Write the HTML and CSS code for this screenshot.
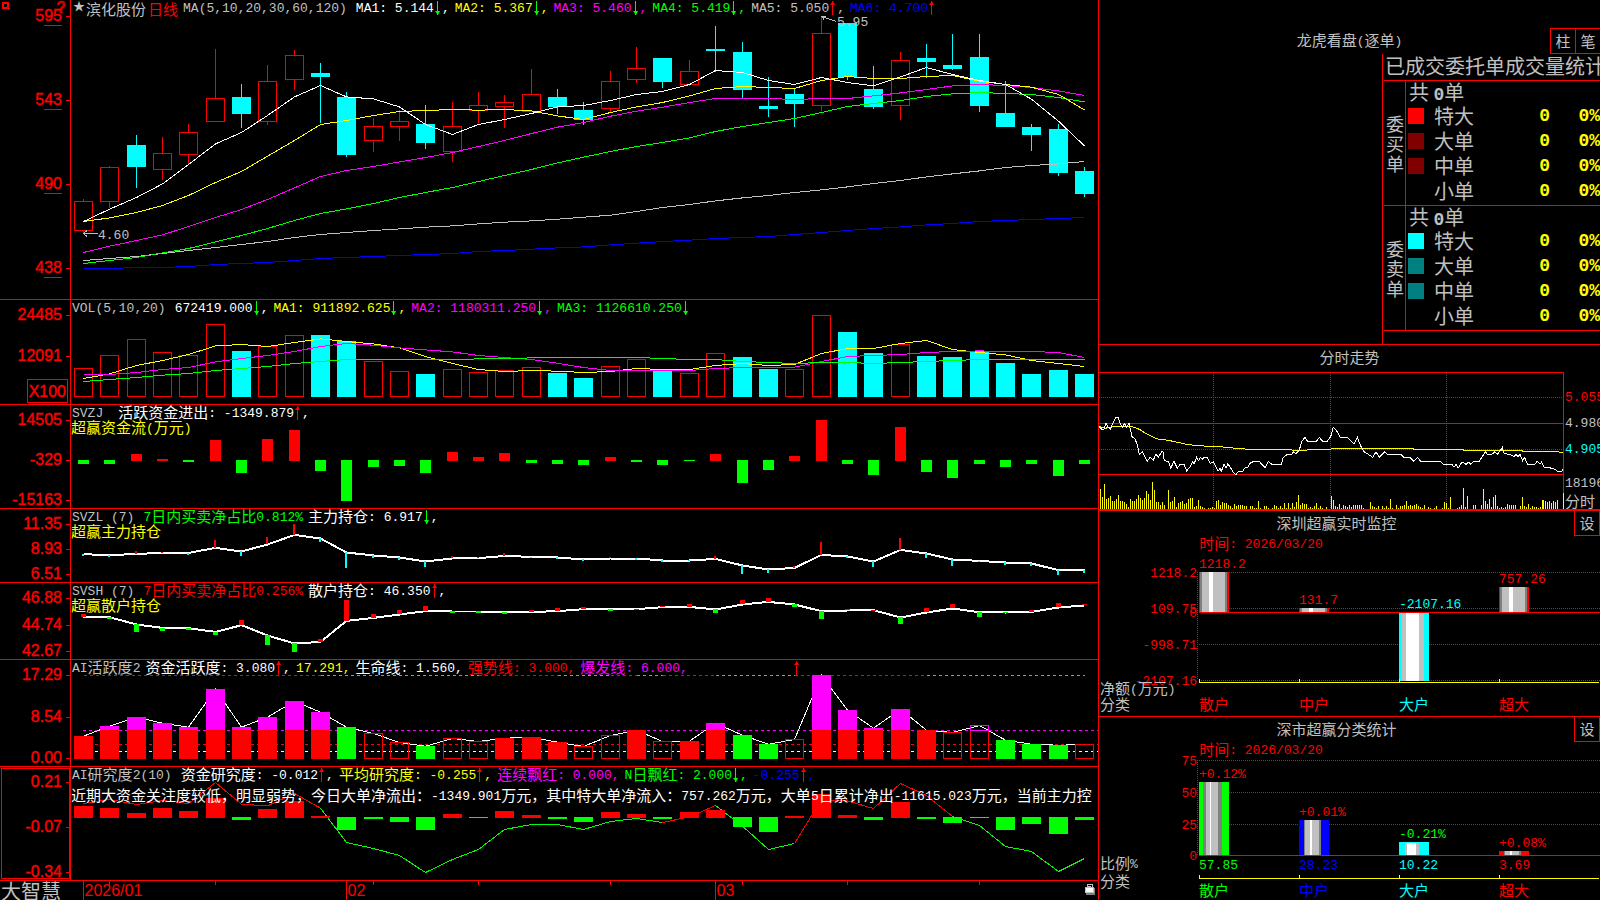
FILE: index.html
```html
<!DOCTYPE html>
<html lang="zh-CN">
<head>
<meta charset="utf-8">
<title>大智慧 - 滨化股份 日线</title>
<link rel="stylesheet" href="styles.css">
</head>
<body>
<div class="app">
  <main class="charts">
    <section class="panel price">
      <div class="axis">
        <svg class="pin" width="8" height="8" viewBox="0 0 8 8"><path d="M1 1h5v5H1zM6 6l1.500 1.500" fill="none" stroke="#f00" stroke-width="2"/></svg>
        <span class="help">?</span>
        <span class="lab u">595</span><span class="lab u">543</span><span class="lab u">490</span><span class="lab u">438</span>
      </div>
      <div class="plot">
        <svg id="price" class="draw"></svg>
        <div class="head name-row">
          <span class="gray star">★</span><span class="gray zh">滨化股份</span><span class="red zh">日线</span>
          <span class="gray args">MA(5,10,20,30,60,120)</span>
          <span class="white">MA1: 5.144<i class="dn"></i>,</span>
          <span class="yellow">MA2: 5.367<i class="dn"></i>,</span>
          <span class="mag">MA3: 5.460<i class="dn"></i>,</span>
          <span class="green">MA4: 5.419<i class="dn"></i>,</span>
          <span class="gray">MA5: 5.050<i class="up"></i>,</span>
          <span class="blue">MA6: 4.700<i class="up"></i></span>
        </div>
      </div>
    </section>

    <section class="panel vol">
      <div class="axis"><span class="lab">24485</span><span class="lab mid">12091</span><span class="unit">X100</span></div>
      <div class="plot">
        <svg id="vol" class="draw"></svg>
        <div class="head">
          <span class="gray args">VOL(5,10,20)</span>
          <span class="white">672419.000<i class="dn"></i>,</span>
          <span class="yellow">MA1: 911892.625<i class="dn"></i>,</span>
          <span class="mag">MA2: 1180311.250<i class="dn"></i>,</span>
          <span class="green">MA3: 1126610.250<i class="dn"></i></span>
        </div>
      </div>
    </section>

    <section class="panel">
      <div class="axis"><span class="lab">14505</span><span class="lab">-329</span><span class="lab">-15163</span></div>
      <div class="plot">
        <svg id="flow" class="draw"></svg>
        <div class="head">
          <span class="gray wide">SVZJ</span>
          <span class="white"><span class="zh">活跃资金进出</span>: -1349.879<i class="up"></i>,</span>
        </div>
        <div class="sub yellow"><span class="zh">超赢资金流</span>(<span class="zh">万元</span>)</div>
      </div>
    </section>

    <section class="panel">
      <div class="axis"><span class="lab">11.35</span><span class="lab">8.93</span><span class="lab">6.51</span></div>
      <div class="plot">
        <svg id="main" class="draw"></svg>
        <div class="head">
          <span class="gray args">SVZL (7)</span>
          <span class="green">7<span class="zh">日内买卖净占比</span>0.812%</span>
          <span class="white"><span class="zh">主力持仓</span>: 6.917<i class="dn"></i>,</span>
        </div>
        <div class="sub yellow"><span class="zh">超赢主力持仓</span></div>
      </div>
    </section>

    <section class="panel">
      <div class="axis"><span class="lab">46.88</span><span class="lab">44.74</span><span class="lab">42.67</span></div>
      <div class="plot">
        <svg id="retail" class="draw"></svg>
        <div class="head">
          <span class="gray args">SVSH (7)</span>
          <span class="red">7<span class="zh">日内买卖净占比</span>0.256%</span>
          <span class="white"><span class="zh">散户持仓</span>: 46.350<i class="up"></i>,</span>
        </div>
        <div class="sub yellow"><span class="zh">超赢散户持仓</span></div>
      </div>
    </section>

    <section class="panel">
      <div class="axis"><span class="lab">17.29</span><span class="lab">8.54</span><span class="lab">0.00</span></div>
      <div class="plot">
        <svg id="active" class="draw"></svg>
        <div class="head">
          <span class="gray">AI<span class="zh">活跃度</span>2</span>
          <span class="white"><span class="zh">资金活跃度</span>: 3.080<i class="up"></i>,</span>
          <span class="yellow">17.291,</span>
          <span class="white"><span class="zh">生命线</span>: 1.560,</span>
          <span class="red"><span class="zh">强势线</span>: 3.000,</span>
          <span class="mag"><span class="zh">爆发线</span>: 6.000,</span>
          <span class="signal"><i class="up"></i></span>
        </div>
      </div>
    </section>

    <section class="panel current">
      <div class="axis"><span class="lab">0.21</span><span class="lab">-0.07</span><span class="lab">-0.34</span></div>
      <div class="plot">
        <svg id="study" class="draw"></svg>
        <div class="head">
          <span class="gray args">AI<span class="zh">研究度</span>2(10)</span>
          <span class="white"><span class="zh">资金研究度</span>: -0.012<i class="up"></i>,</span>
          <span class="yellow"><span class="zh">平均研究度</span>: -0.255<i class="up"></i>,</span>
          <span class="mag"><span class="zh">连续飘红</span>: 0.000,</span>
          <span class="green">N<span class="zh">日飘红</span>: 2.000<i class="dn"></i>,</span>
          <span class="blue">-0.255<i class="up"></i>,</span>
        </div>
        <div class="sub note white"><span class="zh">近期大资金关注度较低，明显弱势，今日大单净流出：</span>-1349.901<span class="zh">万元，其中特大单净流入：</span>757.262<span class="zh">万元，大单</span>5<span class="zh">日累计净出</span>-11615.023<span class="zh">万元，当前主力控</span></div>
      </div>
    </section>

    <footer class="dates">
      <div class="brand">大智慧</div>
      <div class="plot">
        <svg id="dates" class="draw"></svg>
        <div id="months"></div>
        <svg class="lock" width="12" height="13" viewBox="0 0 12 13" shape-rendering="crispEdges"><path d="M10 6v6H2" fill="none" stroke="#808080" stroke-width="2"/><path d="M3 5V2h5v3" fill="none" stroke="#c0c0c0"/><path d="M4 4h3" stroke="#c0c0c0"/><path d="M1 5h9v6H1z" fill="#c0c0c0"/><path d="M2 6h7v4H2z" fill="#fff"/></svg>
      </div>
    </footer>
  </main>

  <aside class="side">
    <section class="box orders">
      <header class="bar"><h2 class="title"><span class="zh">龙虎看盘</span>(<span class="zh">逐单</span>)</h2><div class="tools"><button>柱</button><button>笔</button></div></header>
      <div class="stats">
        <h3>已成交委托单成交量统计</h3>
        <table>
          <colgroup><col class="w-side"><col class="w-chip"><col><col class="w-num"><col class="w-pct"></colgroup>
          <tbody>
            <tr><th rowspan="5" class="vert">委买单</th><td colspan="4" class="sum">共 <b>0</b>单</td></tr>
            <tr><td><span class="chip c1"></span></td><td class="kind">特大</td><td class="num">0</td><td class="num">0%</td></tr>
            <tr><td><span class="chip c2"></span></td><td class="kind">大单</td><td class="num">0</td><td class="num">0%</td></tr>
            <tr><td><span class="chip c2"></span></td><td class="kind">中单</td><td class="num">0</td><td class="num">0%</td></tr>
            <tr><td></td><td class="kind">小单</td><td class="num">0</td><td class="num">0%</td></tr>
          </tbody>
          <tbody>
            <tr><th rowspan="5" class="vert">委卖单</th><td colspan="4" class="sum">共 <b>0</b>单</td></tr>
            <tr><td><span class="chip c3"></span></td><td class="kind">特大</td><td class="num">0</td><td class="num">0%</td></tr>
            <tr><td><span class="chip c4"></span></td><td class="kind">大单</td><td class="num">0</td><td class="num">0%</td></tr>
            <tr><td><span class="chip c4"></span></td><td class="kind">中单</td><td class="num">0</td><td class="num">0%</td></tr>
            <tr><td></td><td class="kind">小单</td><td class="num">0</td><td class="num">0%</td></tr>
          </tbody>
        </table>
      </div>
    </section>

    <section class="box intraday">
      <h2 class="title"><span class="zh">分时走势</span></h2>
      <div class="trend">
        <div class="plot"><svg id="trend" class="draw"></svg></div>
        <div class="scale"><span class="red">5.055</span><span class="gray">4.980</span><span class="cyan">4.905</span><span class="gray low">18196</span><span class="gray last zh">分时</span></div>
      </div>
    </section>

    <section class="box">
      <header class="bar"><h2 class="title"><span class="zh">深圳超赢实时监控</span></h2><button>设</button></header>
      <p class="time"><span class="zh">时间</span>: 2026/03/20</p>
      <div class="over" id="net"></div>
    </section>

    <section class="box last-box">
      <header class="bar"><h2 class="title"><span class="zh">深市超赢分类统计</span></h2><button>设</button></header>
      <p class="time"><span class="zh">时间</span>: 2026/03/20</p>
      <div class="over" id="share"></div>
    </section>
  </aside>
</div>
<script src="app.js"></script>
</body>
</html>
```

FILE: styles.css
```css
* { box-sizing: border-box; }
html, body { height: 100%; }
body {
  margin: 0;
  background: #000;
  color: #c0c0c0;
  font: 13px/15px "Liberation Mono", "Noto Sans CJK SC", monospace;
  overflow: hidden;
}
h2, h3, p { margin: 0; font-weight: normal; }
.zh { font: 400 15px/0 "Noto Sans CJK SC", sans-serif; vertical-align: -1px; }

.app { display: grid; grid-template-columns: minmax(0, 1099fr) minmax(0, 501fr); height: 100vh; }
.charts {
  display: grid;
  grid-template-rows:
    minmax(0, 300fr) minmax(0, 105fr) minmax(0, 104fr) minmax(0, 74fr)
    minmax(0, 77fr) minmax(0, 107fr) minmax(0, 114fr) minmax(0, 19fr);
  border-right: 1px solid #f00;
}

.white { color: #fff; }
.yellow { color: #ff0; }
.mag { color: #f0f; }
.green { color: #0f0; }
.gray { color: #c0c0c0; }
.blue { color: #00f; }
.red { color: #f00; }
.cyan { color: #0ff; }

.panel { display: grid; grid-template-columns: 71px minmax(0, 1fr); border-bottom: 1px solid #f00; }
.axis {
  position: relative;
  display: flex;
  flex-direction: column;
  justify-content: space-between;
  align-items: flex-end;
  padding: 7px 8px 0 0;
  border-right: 1px solid #f00;
  color: #f00;
  font: 16px/16px "Liberation Sans", Arial, sans-serif;
  -webkit-text-stroke: 0.4px #f00;
}
.price .axis { padding-top: 8px; padding-bottom: 23px; }
.vol .axis { padding-bottom: 1px; }
.current .axis { outline: 1px solid #f00; outline-offset: -2px; }
.lab { position: relative; }
.lab::before { content: ""; position: absolute; right: -8px; top: 8px; width: 4px; height: 1px; background: #f00; }
.lab.u::after { content: ""; position: absolute; right: 0; bottom: -2px; width: 18px; height: 1px; background: #f00; }
.lab.mid { margin-top: 10px; }
.unit { border: 1px solid #f00; padding: 3px 1px 1px; margin-right: -6px; line-height: 18px; }
.pin { position: absolute; left: 2px; top: 2px; }
.help { position: absolute; right: 4px; top: 0; font-weight: bold; color: #c00000; }

.plot { position: relative; min-width: 0; overflow: hidden; }
.draw { position: absolute; inset: 0; width: 100%; height: 100%; display: block; }
.head { position: relative; display: flex; gap: 5px; white-space: pre; padding-left: 1px; height: 15px; line-height: 17px; }
.head .args { margin-right: 4px; }
.head .wide { margin-right: 10px; }
.head .signal { margin-left: 100px; }
.name-row > .zh { line-height: 17px; }
.name-row > .zh + .zh { margin-left: -3px; }
.name-row .star { font-size: 12px; width: 10px; margin: 0 -2px 0 1px; }
.sub { position: relative; white-space: pre; line-height: 17px; height: 15px; }
.note { margin-top: 6px; }
.up, .dn { position: relative; display: inline-block; width: 8px; height: 14px; vertical-align: -3px; }
.up::before, .dn::before { content: ""; position: absolute; left: 3px; top: 0; width: 1px; height: 14px; background: currentColor; }
.up::after, .dn::after { content: ""; position: absolute; left: 1px; width: 0; border: solid transparent; }
.up { color: #f00; }
.dn { color: #0f0; }
.up::after { top: 0; border-width: 0 2px 4px 3px; border-bottom-color: #f00; }
.dn::after { bottom: 0; border-width: 4px 2px 0 3px; border-top-color: #0f0; }

.dates { display: grid; grid-template-columns: 70px minmax(0, 1fr); }
.brand { font: 20px/19px "Noto Sans CJK SC", sans-serif; padding-left: 1px; white-space: nowrap; }
.month { position: absolute; top: 1px; color: #f00; font: 16px/18px "Liberation Sans", Arial, sans-serif; padding-left: 1px; }
.lock { position: absolute; right: 2px; top: 1px; }

.side {
  display: grid;
  grid-template-rows: minmax(0, 345fr) minmax(0, 166fr) minmax(0, 206fr) minmax(0, 183fr);
  min-width: 0;
}
.box { display: flex; flex-direction: column; min-height: 0; border-bottom: 1px solid #f00; overflow: hidden; }
.last-box { border-bottom: 0; }
.title { flex: 1; text-align: center; font-size: 13px; line-height: 28px; }
.bar { display: flex; height: 25px; }
.box button {
  width: 26px;
  height: 25px;
  padding: 0;
  background: #000;
  border: 1px solid #f00;
  border-top: 0;
  color: #c0c0c0;
  font: 15px/20px "Noto Sans CJK SC", sans-serif;
}
.time { color: #f00; padding-left: 20%; line-height: 17px; height: 15px; white-space: pre; }

.orders .bar { padding-top: 28px; height: 54px; position: relative; }
.tools { display: flex; position: absolute; right: -1px; top: 28px; }
.tools button { border-top: 1px solid #f00; height: 26px; }
.tools button + button { margin-left: -1px; }
.stats { flex: 1; align-self: flex-end; width: 218px; border-left: 1px solid #f00; padding-left: 1px; overflow: hidden; }
.stats h3 { font: 20px/24px "Noto Sans CJK SC", sans-serif; padding-left: 1px; height: 26px; white-space: nowrap; }
.stats table { border-collapse: separate; border-spacing: 0; width: 100%; table-layout: fixed; border-bottom: 1px solid #f00; font: 20px/22px "Noto Sans CJK SC", sans-serif; }
.w-side { width: 22px; }
.w-chip { width: 24px; }
.w-num { width: 60px; }
.w-pct { width: 50px; }
.stats tr { height: 25px; }
.stats td, .stats th { padding: 0 0 3px; height: 25px; line-height: 22px; font-weight: 400; }
.stats .sum, .stats .vert { border-top: 1px solid #f00; }
.stats .vert { border-right: 1px solid #f00; font-size: 18px; line-height: 20px; padding: 0 1px 0 2px; word-break: break-all; }
.stats .sum { padding: 0 0 2px 3px; }
.stats b { font: bold 18px/0 "Liberation Mono", monospace; }
.stats .kind { padding-left: 4px; white-space: nowrap; }
.stats .num { color: #ff0; text-align: right; font: bold 18px/22px "Liberation Mono", monospace; }
.chip { display: block; width: 16px; height: 16px; margin: 0 0 0 2px; }
.c1 { background: #f00; }
.c2 { background: #800000; }
.c3 { background: #0ff; }
.c4 { background: #008080; }

.intraday { border-bottom-width: 2px; }
.intraday .title { flex: none; height: 27px; }
.trend { flex: 1; display: grid; grid-template-columns: minmax(0, 465fr) minmax(0, 36fr); min-height: 0; }
.scale { display: flex; flex-direction: column; padding: 13px 0 0 1px; line-height: 26px; overflow: hidden; white-space: nowrap; }
.scale .low { margin-top: 13px; line-height: 16px; }
.scale .last { line-height: 17px; }

.over { position: relative; flex: 1; }
.tag { position: absolute; line-height: 18px; margin-top: -8px; white-space: pre; }
.tag.end { transform: translateX(-100%); }
```

FILE: app.js
```js
var X0 = 83.5, STEP = 26.34;
function cx(i) { return Math.floor(X0 + STEP * i) + 0.5; }
function rect(x, y, w, h, fill) {
  return '<rect x="' + x + '" y="' + y + '" width="' + w + '" height="' + h + '" fill="' + fill + '"/>';
}
function frame(x, y, w, h, color) {
  return '<rect x="' + (x + 0.5) + '" y="' + (y + 0.5) + '" width="' + (w - 1) + '" height="' + Math.max(h - 1, 1) + '" fill="none" stroke="' + color + '"/>';
}
function seg(x1, y1, x2, y2, color, extra) {
  return '<line x1="' + x1 + '" y1="' + y1 + '" x2="' + x2 + '" y2="' + y2 + '" stroke="' + color + '" ' + (extra || '') + '/>';
}
function poly(points, color, width) {
  return '<polyline points="' + points.join(' ') + '" fill="none" stroke="' + color + '" stroke-width="' + (width || 1) + '"/>';
}
/* Series values are stored in thirds of a unit below the panel's origin. */
function unit(v, origin) { return Math.round(v / 3) + origin; }
function series(vals, origin, color, width, from) {
  return poly(vals.map(function (v, i) { return cx(i + (from || 0)) + ',' + (v / 3 + origin + 0.2).toFixed(1); }), color, width);
}
function put(id, box, body) {
  var s = document.getElementById(id);
  s.setAttribute('viewBox', box);
  s.setAttribute('preserveAspectRatio', 'none');
  s.setAttribute('shape-rendering', 'crispEdges');
  s.innerHTML = body;
}
var RED = '#f00', CY = '#0ff', GR = '#0f0', YE = '#ff0', MG = '#f0f', GY = '#c0c0c0', BL = '#00f', WH = '#fff';

/* Daily candles: colour, high, body top, body bottom, low */
var candles = ('R597,604,691,700 R498,502,604,624 C405,435,501,564 R411,460,508,540 R372,397,463,493 R147,295,364,364 C252,291,342,384 R195,244,364,375 R150,166,238,270 C189,219,231,369 C276,291,465,471 R354,379,421,456 R331,364,379,423 C315,372,429,447 R306,379,454,486 R276,316,331,370 R285,307,319,384 R207,283,334,334 C267,291,321,342 C306,330,360,375 R213,244,325,337 R141,205,238,249 C174,174,246,264 R180,214,253,258 C78,147,153,216 C126,156,270,294 C231,318,327,351 C267,282,312,381 R50,100,316,333 C69,69,231,240 C198,267,321,327 R156,181,316,360 C132,174,186,234 C102,195,207,210 C102,171,318,336 C243,339,381,381 C372,381,405,453 C372,387,519,528 C501,513,582,591').split(' ');
var out = '';
candles.forEach(function (c, i) {
  var v = c.slice(1).split(',').map(function (n) { return unit(+n, 0); }), x = cx(i);
  if (c[0] === 'R') {
    out += seg(x, v[0], x, v[1], RED) + seg(x, v[2], x, v[3], RED) + frame(x - 9.5, v[1], 19, v[2] - v[1] + 1, RED);
  } else {
    out += seg(x, v[0], x, v[3], CY) + rect(x - 9.5, v[1], 19, v[2] - v[1], CY);
  }
});
out += series([805,805,802,802,799,793,790,787,781,775,772,769,766,763,760,754,751,747,743,740,734,729,724,720,715,712,709,703,697,691,685,680,674,670,664,661,658,655,652], 0, BL);
out += series([781,775,769,760,751,742,733,724,712,703,697,691,686,681,677,671,666,662,657,651,645,634,622,613,602,593,586,577,569,560,550,541,530,521,512,502,496,491,484], 0, GY);
out += series([790,781,772,758,745,725,706,685,661,640,626,610,592,577,562,544,526,508,488,471,454,439,427,413,394,379,367,355,337,319,310,301,289,281,277,280,283,292,305], 0, GR);
out += series([757,738,721,704,679,652,628,598,563,529,511,499,485,472,457,439,421,400,381,367,348,333,321,307,295,295,295,298,295,295,287,278,268,257,253,256,262,272,286], 0, MG);
out += series([664,653,637,616,586,547,514,468,421,373,361,346,334,331,328,330,328,332,347,358,337,320,307,287,265,259,262,265,241,229,235,235,229,226,243,253,261,283,329], 0, YE);
out += series([664,627,592,551,493,431,397,346,290,256,290,296,320,373,403,373,358,340,320,316,301,283,274,253,211,217,241,253,232,247,257,230,202,223,241,253,297,363,437], 0, WH);
out += poly(['98,233.5', '83,233.5'], GY) + poly(['87,230.5', '83.5,233.5', '87,236.5'], GY);
out += poly(['836,21.5', '822,16.5'], GY) + poly(['826,16.5', '822,16.5', '824,20'], GY);
put('price', '71 0 1027 299', out);
function tag(host, x, y, text, cls, box) {
  var e = document.createElement('span');
  e.className = 'tag ' + cls;
  e.style.left = ((x - box[0]) / box[2] * 100) + '%';
  e.style.top = ((y - box[1]) / box[3] * 100) + '%';
  e.innerHTML = text.replace(/[\u4e00-\u9fff]+/g, '<span class="zh">$&</span>');
  host.appendChild(e);
}
var priceHost = document.getElementById('price').parentNode;
tag(priceHost, 98, 235, '4.60', 'gray', [71, 0, 1027, 299]);
tag(priceHost, 837, 22, '5.95', 'gray', [71, 0, 1027, 299]);

/* Volume */
out = '';
'R220 R181 R133 R172 R181 R88 C168 R154 R121 C120 C138 R199 R229 C237 R223 R232 R226 R217 C234 C249 R214 R193 C228 R235 R175 C186 C222 R223 R61 C111 C174 R148 C183 C186 C168 C204 C237 C225 C237'.split(' ').forEach(function (c, i) {
  var y = unit(+c.slice(1), 295), x = cx(i) - 9.5;
  out += c[0] === 'R' ? frame(x, y, 19, 397 - y, RED) : rect(x, y, 19, 397 - y, CY);
});
out += series([250,236,211,196,178,152,148,154,142,131,139,146,158,184,205,223,229,226,228,232,229,220,223,223,211,205,211,208,175,160,160,145,136,163,172,179,196,205,214], 295, YE);
out += series([238,238,232,223,217,200,190,181,169,154,145,150,158,164,170,181,187,193,204,217,226,226,226,226,220,217,217,216,199,184,181,178,172,169,167,169,169,172,187], 295, MG);
out += series([259,253,247,240,235,226,220,214,205,199,193,193,193,193,193,191,190,188,187,187,187,187,190,193,193,199,202,205,202,202,205,202,199,196,193,193,193,193,193], 295, GR);
put('vol', '71 300 1027 104', out);

/* Signed bars round a base line */
function signed(list, origin, base, width) {
  var s = '';
  list.split(' ').forEach(function (c, i) {
    var y = unit(+c.slice(1), origin), x = cx(i) - width / 2;
    s += c[0] === 'r' ? rect(x, y, width, base + 1 - y, RED) : rect(x, base, width, Math.max(y - base, 1), GR);
  });
  return s;
}
put('flow', '71 405 1027 103', signed('g507 g507 r477 r492 g500 r435 g534 r432 r405 g528 g618 g516 g513 g534 r471 r486 r474 g504 g507 g510 r486 g501 g510 g498 r477 g564 g525 r483 r375 g507 g540 r396 g531 g549 g507 g516 g507 g543 g507', 295, 460, 11));

/* Line with a tick hanging from each point */
function hanging(line, ticks, origin, width, downColor) {
  var s = series(line, origin, WH, 2), bars = '';
  ticks.split(' ').forEach(function (c, i) {
    var a = Math.round(line[i] / 3) + origin, b = unit(+c.slice(1), origin), top = Math.min(a, b);
    bars += rect(cx(i) - 0.5 - Math.floor(width / 2), top, width, Math.max(Math.abs(a - b), 1), c[0] === 'r' ? RED : downColor);
  });
  return s + bars;
}
put('main', '71 509 1027 73', hanging([777,780,776,773,773,758,769,748,719,730,772,781,787,799,790,789,782,785,787,793,790,790,796,796,791,811,823,818,779,784,799,764,775,793,797,802,805,825,825],
  'c782 c785 r768 r771 c779 r735 c783 r726 r687 c741 c819 c789 c795 c816 r783 r786 r774 c789 c791 c797 r786 c795 c801 c797 r783 c837 c834 r813 r741 c789 c816 r729 c789 c813 c801 c810 c813 c840 c834', 295, 2, CY));
put('retail', '71 583 1027 76', hanging([80,81,103,113,114,125,105,136,160,155,92,83,73,63,64,64,66,65,63,57,57,57,51,50,58,43,35,43,63,61,60,82,67,55,66,67,65,52,46],
  'r72 g87 g126 g123 g120 g135 r90 g165 g186 r147 r30 r72 r60 r48 g69 g69 g72 r60 r54 r51 g63 r56 r47 r42 g69 r30 r24 g51 g87 r57 r60 g102 r54 r42 g81 g69 r60 r39 r42', 590, 5, GR));

/* Activity: F filled, O outlined, G green */
var act = 'F438 F408 F381 F399 F411 F297 F411 F381 F333 F366 G411 O430 O457 G468 O445 O454 F444 F441 F456 O469 O436 F420 O454 F453 F399 G435 G462 O448 F255 F360 F414 F357 F420 O427 O406 G450 G462 G465 O463'.split(' ');
var dash = 'stroke-dasharray="3 3"';
out = '';
[[0,9,RED],[9,15,GR],[15,18,RED],[18,20,GR],[20,21,RED],[21,22,GR],[22,24,RED],[24,27,GR],[27,32,RED],[32,38,GR]].forEach(function (s) {
  out += seg(cx(s[0]), 675.5, cx(s[1]), 675.5, s[2], dash);
});
out += seg(83, 730.5, 1098, 730.5, MG, dash) + seg(83, 744.5, 1098, 744.5, RED, dash) + seg(83, 751.5, 1098, 751.5, WH, dash);
out += series(act.map(function (c) { return +c.slice(1); }), 590, WH);
act.forEach(function (c, i) {
  var y = unit(+c.slice(1), 590), x = cx(i) - 9.5;
  if (c[0] === 'G') out += rect(x, y, 19, 759 - y, GR);
  if (c[0] === 'F') out += rect(x, Math.max(y, 730), 19, 759 - Math.max(y, 730), RED) + (y < 730 ? rect(x, y, 19, 730 - y, MG) : '');
  if (c[0] === 'O') out += frame(x, Math.max(y, 730), 19, 759 - Math.max(y, 730), RED) + (y < 730 ? frame(x, y, 19, 731 - y, MG) : '');
});
put('active', '71 660 1027 106', out);

/* Study */
var study = [640,628,643,631,640,577,642,647,610,654,757,775,796,847,808,778,718,703,703,718,694,685,697,680,646,708,778,760,628,632,655,580,616,679,706,769,784,844,805];
out = '';
[[0,9,RED],[9,22,GR],[22,24,RED],[24,27,GR],[27,33,RED],[33,38,GR]].forEach(function (s) {
  out += series(study.slice(s[0], s[1] + 1), 590, s[2], 1, s[0]);
});
out += signed('r648 r654 r669 r654 r663 r624 g690 r657 r633 r678 g720 g687 g696 g720 r672 g684 r663 r675 g687 g696 r666 r672 g687 r666 r660 g711 g726 r678 r612 r675 g690 r636 g687 g699 g684 g720 g702 g732 g690', 590, 817, 19);
put('study', '71 767 1027 113', out);

/* Date ruler */
out = '';
[1, 5, 11, 15, 20, 25, 29, 34].forEach(function (i) { out += seg(cx(i), 881, cx(i), 885, RED); });
[0, 10, 24].forEach(function (i) { out += seg(cx(i), 881, cx(i), 900, RED); });
put('dates', '70 881 1028 19', out);
[[0, '2026/01'], [10, '02'], [24, '03']].forEach(function (m) {
  var e = document.createElement('span');
  e.className = 'month';
  e.textContent = m[1];
  e.style.left = ((cx(m[0]) - 70) / 1028 * 100) + '%';
  document.getElementById('months').appendChild(e);
});

/* Intraday trend */
function path(txt, color) {
  return poly(txt.split(' ').map(function (p) {
    var a = p.split(',');
    return (1090 + a[0] / 3).toFixed(1) + ',' + (340 + a[1] / 3).toFixed(1);
  }), color);
}
var dot = 'stroke-dasharray="1 1"';
out = '';
[1213.5, 1330.5, 1446.5].forEach(function (x) { out += seg(x, 373, x, 509, RED, dot); });
[397.5, 449.5].forEach(function (y) { out += seg(1099, y, 1563, y, RED, dot); });
[372.5, 423.5, 474.5].forEach(function (y) { out += seg(1099, y, 1563, y, RED); });
out += seg(1563.5, 372, 1563.5, 510, RED);
/* Traded volume by minute: start of the run, then one base-36 height for each bar */
[[31, 'kcpabd88ae88752'], [121, 'a88aeb9bif9rj'], [199, '77474'], [235, 'j78c267856abb2393210112189'],
 [379, '89476643153444330331181033101431310'], [583, '6161627e46551213613102'], [724, 'd9325143242444441'],
 [841, '7321303131'], [901, 'a104133483434532140210130011'], [1063, '761c'], [1102, '124l2d'],
 [1150, '44004k85a2ce3121254444'], [1291, '3c3251322129'], [1360, '98786879']].forEach(function (run) {
  run[1].split('').forEach(function (h, k) {
    var v = parseInt(h, 36);
    if (v) out += rect(Math.round(1090 + run[0] / 3 + k * 2), 509 - v, 1, v, YE);
  });
});
out += rect(1563, 493, 1, 16, YE);
out += path('27,259 45,265 60,262 84,259 126,260 148,268 172,283 198,296 235,301 290,313 320,317 390,320 430,324 475,328 590,329 620,331 720,328 730,325 968,325 972,328 1118,328 1122,331 1295,331 1298,334 1395,334 1419,338', YE);
out += path('27,260 36,268 42,268 48,250 54,262 62,268 68,250 78,232 84,232 90,250 97,262 104,250 109,262 117,250 121,268 126,290 135,297 142,314 148,343 157,335 165,350 172,364 180,352 190,360 198,343 205,352 215,335 219,335 223,362 235,364 242,385 252,364 262,385 270,373 282,373 290,393 300,380 308,366 312,372 320,352 325,362 332,352 337,358 342,352 352,352 360,370 370,366 378,380 384,394 390,385 394,394 402,373 408,385 413,373 420,380 430,397 438,404 445,394 458,394 465,383 473,383 480,370 492,364 508,364 515,373 526,383 535,364 545,373 574,373 580,352 592,343 605,343 611,335 618,341 628,330 635,305 645,292 652,303 680,303 688,292 697,303 712,303 722,290 730,262 738,270 745,280 750,292 772,292 782,303 792,312 802,292 812,318 822,335 835,343 848,352 858,335 868,352 885,335 892,343 932,343 942,352 960,352 972,364 983,352 992,364 1050,364 1060,373 1086,373 1092,382 1098,373 1104,385 1116,366 1128,373 1136,366 1142,373 1152,364 1168,364 1178,348 1186,335 1192,343 1206,343 1214,335 1222,343 1232,330 1237,322 1243,341 1258,343 1272,350 1278,343 1284,350 1290,343 1298,362 1304,352 1312,372 1335,372 1342,364 1350,372 1355,366 1362,382 1390,385 1403,394 1415,394 1419,387', WH);
put('trend', '1099 372 465 137', out);

/* Category bar charts: stripes are [offset, colour] pairs inside a 30-wide column */
function column(x, y, h, stripes) {
  return stripes.map(function (s, i) {
    var end = i + 1 < stripes.length ? stripes[i + 1][0] : 30;
    return rect(x + s[0], y, end - s[0], h, s[1]);
  }).join('');
}
function canvas(id, box, body) {
  var host = document.getElementById(id);
  host.innerHTML = '<svg class="draw" id="' + id + '-svg"></svg>';
  put(id + '-svg', box.join(' '), body);
  return host;
}
function ruler(y) {
  var s = seg(1199, y, 1599, y, YE);
  [1199.5, 1299.5, 1399.5, 1499.5].forEach(function (x) { s += seg(x, y - 4, x, y, YE); });
  return s;
}
var G8 = '#808080';
var metal = [[0, RED], [1, G8], [3, GY], [10, WH], [14, GY], [26, G8], [28, RED]];
var box = [1099, 551, 501, 165];
out = seg(1197.5, 572, 1197.5, 680, RED, dot);
[572.5, 608.5, 644.5, 680.5].forEach(function (y) { out += seg(1199, y, 1600, y, RED, dot); });
out += column(1199, 572, 40, metal) + column(1299, 608, 4, metal) + column(1499, 587, 25, metal);
out += column(1399, 613, 68, [[0, CY], [3, GY], [7, WH], [20, GY], [25, CY]]);
out += seg(1199, 612.5, 1600, 612.5, RED) + ruler(682.5);
var host = canvas('net', box, out);
[[573, '1218.2'], [609, '109.75'], [613, '0'], [645, '-998.71'], [681, '-2107.16']].forEach(function (l) { tag(host, 1197, l[0], l[1], 'red end', box); });
[[1199, 564, '1218.2', 'red'], [1299, 600, '131.7', 'red'], [1399, 604, '-2107.16', 'cyan'], [1499, 579, '757.26', 'red'],
 [1100, 689, '净额(万元)', 'gray'], [1100, 705, '分类', 'gray'],
 [1199, 705, '散户', 'red'], [1299, 705, '中户', 'red'], [1399, 705, '大户', 'cyan'], [1499, 705, '超大', 'red']].forEach(function (l) { tag(host, l[0], l[1], l[2], l[3], box); });

box = [1099, 757, 501, 143];
out = seg(1197.5, 760, 1197.5, 855, RED, dot);
[760.5, 792.5, 824.5].forEach(function (y) { out += seg(1199, y, 1600, y, RED, dot); });
out += column(1199, 782, 73, [[0, GR], [4, G8], [7, GY], [11, WH], [12, GY], [19, G8], [23, GR]]);
out += column(1299, 820, 35, [[0, BL], [5, G8], [6, GY], [11, WH], [13, GY], [20, G8], [22, BL]]);
out += column(1399, 842, 13, [[0, CY], [6, GY], [8, WH], [17, GY], [20, CY]]) + rect(1399, 842, 30, 1, CY);
out += column(1499, 851, 4, [[0, RED], [5, G8], [6, GY], [11, WH], [13, GY], [20, G8], [22, RED]]);
out += seg(1199, 855.5, 1600, 855.5, RED) + ruler(878.5);
host = canvas('share', box, out);
[[761, '75'], [793, '50'], [825, '25'], [856, '0']].forEach(function (l) { tag(host, 1197, l[0], l[1], 'red end', box); });
[[1199, 774, '+0.12%', 'red'], [1299, 812, '+0.01%', 'red'], [1399, 834, '-0.21%', 'green'], [1499, 843, '+0.08%', 'red'],
 [1199, 865, '57.85', 'green'], [1299, 865, '28.23', 'blue'], [1399, 865, '10.22', 'cyan'], [1499, 865, '3.69', 'red'],
 [1100, 864, '比例%', 'gray'], [1100, 882, '分类', 'gray'],
 [1199, 891, '散户', 'green'], [1299, 891, '中户', 'blue'], [1399, 891, '大户', 'cyan'], [1499, 891, '超大', 'red']].forEach(function (l) { tag(host, l[0], l[1], l[2], l[3], box); });
```
